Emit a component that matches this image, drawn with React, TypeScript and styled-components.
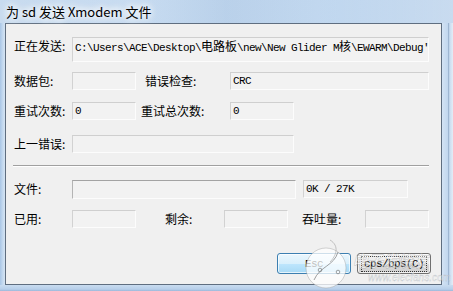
import React from "react";
import styled, { createGlobalStyle } from "styled-components";

const Global = createGlobalStyle`
  html, body { margin: 0; padding: 0; background: #bcd4ee; }
  body { width: 453px; height: 291px; overflow: hidden; }
`;

const Frame = styled.div`
  position: relative;
  width: 453px;
  height: 291px;
  display: flex;
  flex-direction: column;
  background: linear-gradient(90deg, #bfd5ec 0%, #c8dcf1 30%, #c3d9f0 70%, #b6cfea 100%);
  font-family: "Noto Sans CJK SC", "Noto Sans", sans-serif;
  overflow: hidden;
`;

const TitleBar = styled.div`
  position: relative;
  height: 23px;
  flex: none;
  display: flex;
  align-items: center;
  padding-left: 6px;
  padding-bottom: 1px;
  box-sizing: border-box;
  background: linear-gradient(90deg, rgba(255,255,255,0.15) 0%, rgba(255,255,255,0) 30%,
      rgba(150,180,215,0.25) 50%, rgba(255,255,255,0) 75%, rgba(255,255,255,0.25) 100%);
`;

const TitleText = styled.span`
  font-size: 13px;
  color: #000;
  text-shadow: 0 0 6px #fff, 0 0 8px #fff, 0 0 10px rgba(255,255,255,0.9);
  white-space: nowrap;
`;

const Middle = styled.div`
  display: flex;
  height: 262px;
  flex: none;
`;

const SideLeft = styled.div`
  width: 5px;
  flex: none;
  background: linear-gradient(90deg, #a9c6e6 0%, #c7dbf0 60%, #d5e4f3 100%);
`;

const SideRight = styled.div`
  flex: 1;
  background: linear-gradient(90deg, #d3e3f4 0%, #c3d8ef 50%, #8ea8c7 55%, #c9dcf0 70%, #e4ecf6 100%);
`;

const BottomEdge = styled.div`
  flex: 1;
  background: linear-gradient(180deg, #c9dcf0 0%, #b7cfea 70%, #9cb8da 100%);
`;

const Client = styled.div`
  width: 437px;
  height: 262px;
  box-sizing: border-box;
  border: 1px solid #5f6e80;
  background: #f0f0f0;
  padding: 13px 0 0 8px;
  display: flex;
  flex-direction: column;
`;

const Row = styled.div<{ $mt?: number }>`
  display: flex;
  align-items: flex-start;
  margin-top: ${(p) => p.$mt ?? 0}px;
`;

const Label = styled.div<{ $w?: number; $ml?: number }>`
  width: ${(p) => p.$w ?? 58}px;
  margin-left: ${(p) => p.$ml ?? 0}px;
  flex: none;
  font-size: 12px;
  line-height: 18px;
  color: #000;
  white-space: nowrap;
`;

const Field = styled.div<{ $w: number; $h?: number; $ml?: number; $dark?: boolean }>`
  width: ${(p) => p.$w}px;
  height: ${(p) => p.$h ?? 18}px;
  margin-left: ${(p) => p.$ml ?? 0}px;
  flex: none;
  box-sizing: border-box;
  border-top: 1px solid ${(p) => (p.$dark ? "#a3a3a3" : "#cfcfcf")};
  border-left: 1px solid ${(p) => (p.$dark ? "#b4b4b4" : "#d2d2d2")};
  border-right: 1px solid #fcfcfc;
  border-bottom: 1px solid #fcfcfc;
  background: #f2f2f2;
  padding: 0 0 0 2px;
  overflow: hidden;
  white-space: nowrap;
  font-family: "Liberation Mono", "DejaVu Sans Mono", monospace;
  font-size: 11px;
  letter-spacing: -0.6px;
  line-height: 16px;
  color: #000;
`;

const Cjk = styled.span`
  font-family: "Noto Sans CJK SC", sans-serif;
  font-size: 12px;
  letter-spacing: 0;
`;

const Separator = styled.div`
  width: 416px;
  margin-left: -1px;
  height: 0;
  border-top: 1px solid #a0a0a0;
  border-bottom: 1px solid #ffffff;
`;

const ButtonRow = styled.div`
  display: flex;
  justify-content: flex-end;
  gap: 6px;
  margin-top: 25px;
  margin-right: 10px;
`;

const Button = styled.div<{ $hot?: boolean }>`
  width: 74px;
  height: 21px;
  box-sizing: border-box;
  border: 1px solid ${(p) => (p.$hot ? "#3c7fb1" : "#707070")};
  border-radius: 3px;
  background: ${(p) =>
    p.$hot
      ? "linear-gradient(180deg, #eaf6fd 0%, #d9f0fc 50%, #bee6fd 51%, #a7d9f5 100%)"
      : "linear-gradient(180deg, #f2f2f2 0%, #ebebeb 50%, #dddddd 51%, #cfcfcf 100%)"};
  box-shadow: inset 0 0 0 1px rgba(255,255,255,0.7);
  display: flex;
  align-items: center;
  justify-content: center;
  font-family: "Liberation Mono", monospace;
  font-size: 11px;
  letter-spacing: -0.6px;
  color: #000;
`;

const FocusText = styled.span`
  outline: 1px dotted #333;
  outline-offset: 1px;
  padding: 0 1px;
`;

const Watermark = styled.div`
  position: absolute;
  left: 300px;
  top: 236px;
  width: 153px;
  height: 55px;
  pointer-events: none;
`;

const WmTitle = styled.div`
  position: absolute;
  left: 52px;
  top: 12px;
  font-family: "Noto Sans CJK SC", sans-serif;
  font-size: 16px;
  font-weight: 700;
  font-style: italic;
  letter-spacing: -1px;
  color: rgba(255, 255, 255, 0.45);
  -webkit-text-stroke: 0.5px rgba(120, 120, 120, 0.4);
  white-space: nowrap;
`;

const WmUrl = styled.div`
  position: absolute;
  left: 68px;
  top: 36px;
  font-family: "Liberation Sans", sans-serif;
  font-size: 10px;
  font-style: italic;
  color: rgba(255, 255, 255, 0.6);
  -webkit-text-stroke: 0.3px rgba(140, 150, 160, 0.6);
  white-space: nowrap;
`;

export default function App() {
  return (
    <>
      <Global />
      <Frame>
        <TitleBar>
          <TitleText>为 sd 发送 Xmodem 文件</TitleText>
        </TitleBar>
        <Middle>
          <SideLeft />
          <Client>
            <Row>
              <Label>正在发送:</Label>
              <Field $w={357} $h={25}>
                C:\Users\ACE\Desktop\<Cjk>电路板</Cjk>\new\New Glider M<Cjk>核</Cjk>\EWARM\Debug'
              </Field>
            </Row>
            <Row $mt={10}>
              <Label>数据包:</Label>
              <Field $w={64} />
              <Label $ml={9} $w={85}>错误检查:</Label>
              <Field $w={199}>CRC</Field>
            </Row>
            <Row $mt={12}>
              <Label>重试次数:</Label>
              <Field $w={64}>0</Field>
              <Label $ml={5} $w={89}>重试总次数:</Label>
              <Field $w={64}>0</Field>
            </Row>
            <Row $mt={15}>
              <Label>上一错误:</Label>
              <Field $w={222} />
            </Row>
            <Row $mt={12}>
              <Separator />
            </Row>
            <Row $mt={13}>
              <Label>文件:</Label>
              <Field $w={224} $h={19} $dark />
              <Field $w={105} $ml={7}>0K / 27K</Field>
            </Row>
            <Row $mt={11}>
              <Label>已用:</Label>
              <Field $w={64} />
              <Label $ml={29} $w={59}>剩余:</Label>
              <Field $w={64} />
              <Label $ml={14} $w={63}>吞吐量:</Label>
              <Field $w={64} />
            </Row>
            <ButtonRow>
              <Button $hot>Esc</Button>
              <Button><FocusText>cps/bps(C)</FocusText></Button>
            </ButtonRow>
          </Client>
          <SideRight />
        </Middle>
        <BottomEdge />
        <Watermark>
          <svg width="55" height="55" viewBox="0 0 55 55" style={{ position: "absolute", left: 0, top: 0 }}>
            <circle cx="26" cy="32" r="20" fill="rgba(255,255,255,0.75)" stroke="rgba(150,150,150,0.5)" strokeWidth="0.8" />
            <path d="M14 44 C 20 30, 34 30, 38 16" fill="none" stroke="rgba(120,120,120,0.7)" strokeWidth="1" />
            <path d="M30 4 C 40 10, 36 20, 30 26" fill="none" stroke="rgba(160,160,160,0.6)" strokeWidth="1" />
            <circle cx="20" cy="34" r="1.8" fill="none" stroke="rgba(110,110,110,0.8)" strokeWidth="0.8" />
            <circle cx="38" cy="36" r="1.8" fill="none" stroke="rgba(110,110,110,0.8)" strokeWidth="0.8" />
          </svg>
          <WmTitle>电子发烧友</WmTitle>
          <WmUrl>www.elecfans.com</WmUrl>
        </Watermark>
      </Frame>
    </>
  );
}
